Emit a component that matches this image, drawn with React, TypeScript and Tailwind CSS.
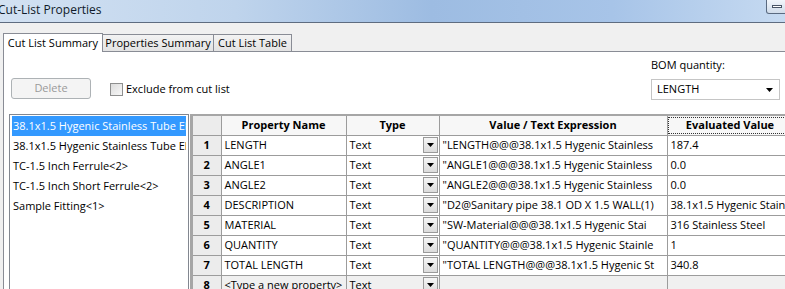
const rows = [
  { n: 1, name: 'LENGTH', value: '"LENGTH@@@38.1x1.5 Hygenic Stainless', ev: '187.4' },
  { n: 2, name: 'ANGLE1', value: '"ANGLE1@@@38.1x1.5 Hygenic Stainless', ev: '0.0' },
  { n: 3, name: 'ANGLE2', value: '"ANGLE2@@@38.1x1.5 Hygenic Stainless', ev: '0.0' },
  { n: 4, name: 'DESCRIPTION', value: '"D2@Sanitary pipe 38.1 OD X 1.5 WALL(1)', ev: '38.1x1.5 Hygenic Stainless Tube' },
  { n: 5, name: 'MATERIAL', value: '"SW-Material@@@38.1x1.5 Hygenic Stai', ev: '316 Stainless Steel' },
  { n: 6, name: 'QUANTITY', value: '"QUANTITY@@@38.1x1.5 Hygenic Stainle', ev: '1' },
  { n: 7, name: 'TOTAL LENGTH', value: '"TOTAL LENGTH@@@38.1x1.5 Hygenic St', ev: '340.8' },
];

const items = [
  '38.1x1.5 Hygenic Stainless Tube El',
  '38.1x1.5 Hygenic Stainless Tube El',
  'TC-1.5 Inch Ferrule<2>',
  'TC-1.5 Inch Short Ferrule<2>',
  'Sample Fitting<1>',
];

function DropButton() {
  return (
    <div className="w-[15px] h-[16px] shrink-0 flex items-center justify-center border border-[#9a9a9a] bg-[linear-gradient(#f6f6f6,#dcdcdc)]">
      <svg width="7" height="4" viewBox="0 0 7 4"><path d="M0 0h7L3.5 4z" fill="#000" /></svg>
    </div>
  );
}

function Cell({ children, cls = '' }: { children?: React.ReactNode; cls?: string }) {
  return (
    <td className={`border border-[#9c9c9c] p-0 ${cls}`}>
      <div className="overflow-hidden whitespace-nowrap pl-[3px]">{children}</div>
    </td>
  );
}

function TypeCell({ grey }: { grey?: boolean }) {
  return (
    <td className={`border border-[#9c9c9c] p-0 ${grey ? 'bg-[#f0f0f0]' : 'bg-white'}`}>
      <div className="flex items-center justify-between pl-[3px] pr-[1px]">
        <span>Text</span>
        <DropButton />
      </div>
    </td>
  );
}

export default function App() {
  return (
    <div className="w-[785px] h-[289px] overflow-hidden bg-[#f0f0f0] font-['Open_Sans',sans-serif] text-[11px] text-black flex flex-col">
      {/* title bar */}
      <div className="h-[23px] shrink-0 flex items-center justify-between border-b border-[#5e6c80] bg-[linear-gradient(90deg,#d2e1f2_0%,#bfd4ec_30%,#9dbce2_55%,#a7c4e8_78%,#c6daf1_100%)]">
        <span className="text-[12px] ml-[-2px] mt-[-3px] text-[#0f1a2a]">Cut-List Properties</span>
        <div className="self-start w-[22px] h-[14px] mr-[-3px] rounded-b-[3px] border border-t-0 border-[#5a6a80] bg-[linear-gradient(#f2f6fb,#d0dcea)] flex items-center justify-center">
          <div className="w-[10px] h-[3px] border border-[#4a5566] bg-white" />
        </div>
      </div>

      {/* tabs */}
      <div className="h-[28px] shrink-0 flex items-end pl-[3px]">
        <div className="w-[100px] h-[19px] pt-[1px] text-center bg-white border border-b-0 border-[#898c95] relative top-[1px] leading-[16px]">Cut List Summary</div>
        <div className="w-[111px] h-[17px] text-center bg-[linear-gradient(#f3f3f3,#e3e3e3)] border border-l-0 border-b-0 border-[#898c95] leading-[16px]">Properties Summary</div>
        <div className="w-[78px] h-[17px] text-center bg-[linear-gradient(#f3f3f3,#e3e3e3)] border border-l-0 border-b-0 border-[#898c95] leading-[16px]">Cut List Table</div>
      </div>

      {/* panel */}
      <div className="flex-1 ml-[3px] bg-white border-l border-t border-[#898c95] flex flex-col">
        <div className="flex h-[62px] shrink-0">
          <div className="flex items-start pt-[26px] pl-[7px]">
            <div className="w-[80px] h-[21px] rounded-[3px] border border-[#adb2b5] bg-[#f4f4f4] text-[#9a9a9a] flex items-center justify-center">Delete</div>
            <div className="flex items-center ml-[19px] mt-[3px]">
              <div className="w-[13px] h-[13px] border border-[#8e8f8f] bg-[linear-gradient(135deg,#dcdcdc,#f8f8f8)]" />
              <span className="ml-[3px]">Exclude from cut list</span>
            </div>
          </div>
          <div className="ml-auto mr-[5px] w-[129px] pt-[5px] flex flex-col">
            <span className="leading-[16px]">BOM quantity:</span>
            <div className="mt-[6px] h-[21px] border border-[#c5c5c5] bg-white flex items-center justify-between pl-[5px] pr-[6px]">
              <span>LENGTH</span>
              <svg width="7" height="4" viewBox="0 0 7 4"><path d="M0 0h7L3.5 4z" fill="#000" /></svg>
            </div>
          </div>
        </div>

        <div className="flex flex-1 pl-[5px]">
          <div className="w-[180px] shrink-0 border border-b-0 border-[#828790] pt-[1px] px-[2px] overflow-hidden">
            {items.map((t, i) => (
              <div key={i} className={`h-[20px] leading-[20px] pl-[1px] whitespace-nowrap overflow-hidden ${i === 0 ? 'bg-[#3399ff] text-white' : ''}`}>{t}</div>
            ))}
          </div>
          <div className="ml-[1px] flex-1 border-l-[3px] border-t-[2px] border-[#a6a6a6] overflow-hidden">
            <table className="border-collapse table-fixed w-[600px] leading-[18px]">
              <colgroup>
                <col className="w-[28px]" />
                <col className="w-[125px]" />
                <col className="w-[93px]" />
                <col className="w-[228px]" />
                <col className="w-[126px]" />
              </colgroup>
              <thead>
                <tr className="h-[19px] font-bold bg-[#f7f7f7]">
                  <th className="border border-t-0 border-l-0 border-[#9c9c9c] bg-[#ececec]"></th>
                  <th className="border border-t-0 border-[#9c9c9c]">Property Name</th>
                  <th className="border border-t-0 border-[#9c9c9c]">Type</th>
                  <th className="border border-t-0 border-[#9c9c9c]">Value / Text Expression</th>
                  <th className="border border-t-0 border-[#9c9c9c] outline-1 outline-dotted outline-offset-[-2px] outline-[#333]">Evaluated Value</th>
                </tr>
              </thead>
              <tbody>
                {rows.map((r) => (
                  <tr key={r.n} className="h-[20px]">
                    <td className="border border-l-0 border-[#9c9c9c] bg-[#ececec] font-bold text-center">{r.n}</td>
                    <Cell>{r.name}</Cell>
                    <TypeCell />
                    <Cell>{r.value}</Cell>
                    <Cell>{r.ev}</Cell>
                  </tr>
                ))}
                <tr className="h-[20px] bg-[#f0f0f0]">
                  <td className="border border-l-0 border-[#9c9c9c] bg-[#ececec] font-bold text-center">8</td>
                  <Cell>&lt;Type a new property&gt;</Cell>
                  <TypeCell grey />
                  <Cell />
                  <Cell />
                </tr>
              </tbody>
            </table>
          </div>
        </div>
      </div>
    </div>
  );
}
